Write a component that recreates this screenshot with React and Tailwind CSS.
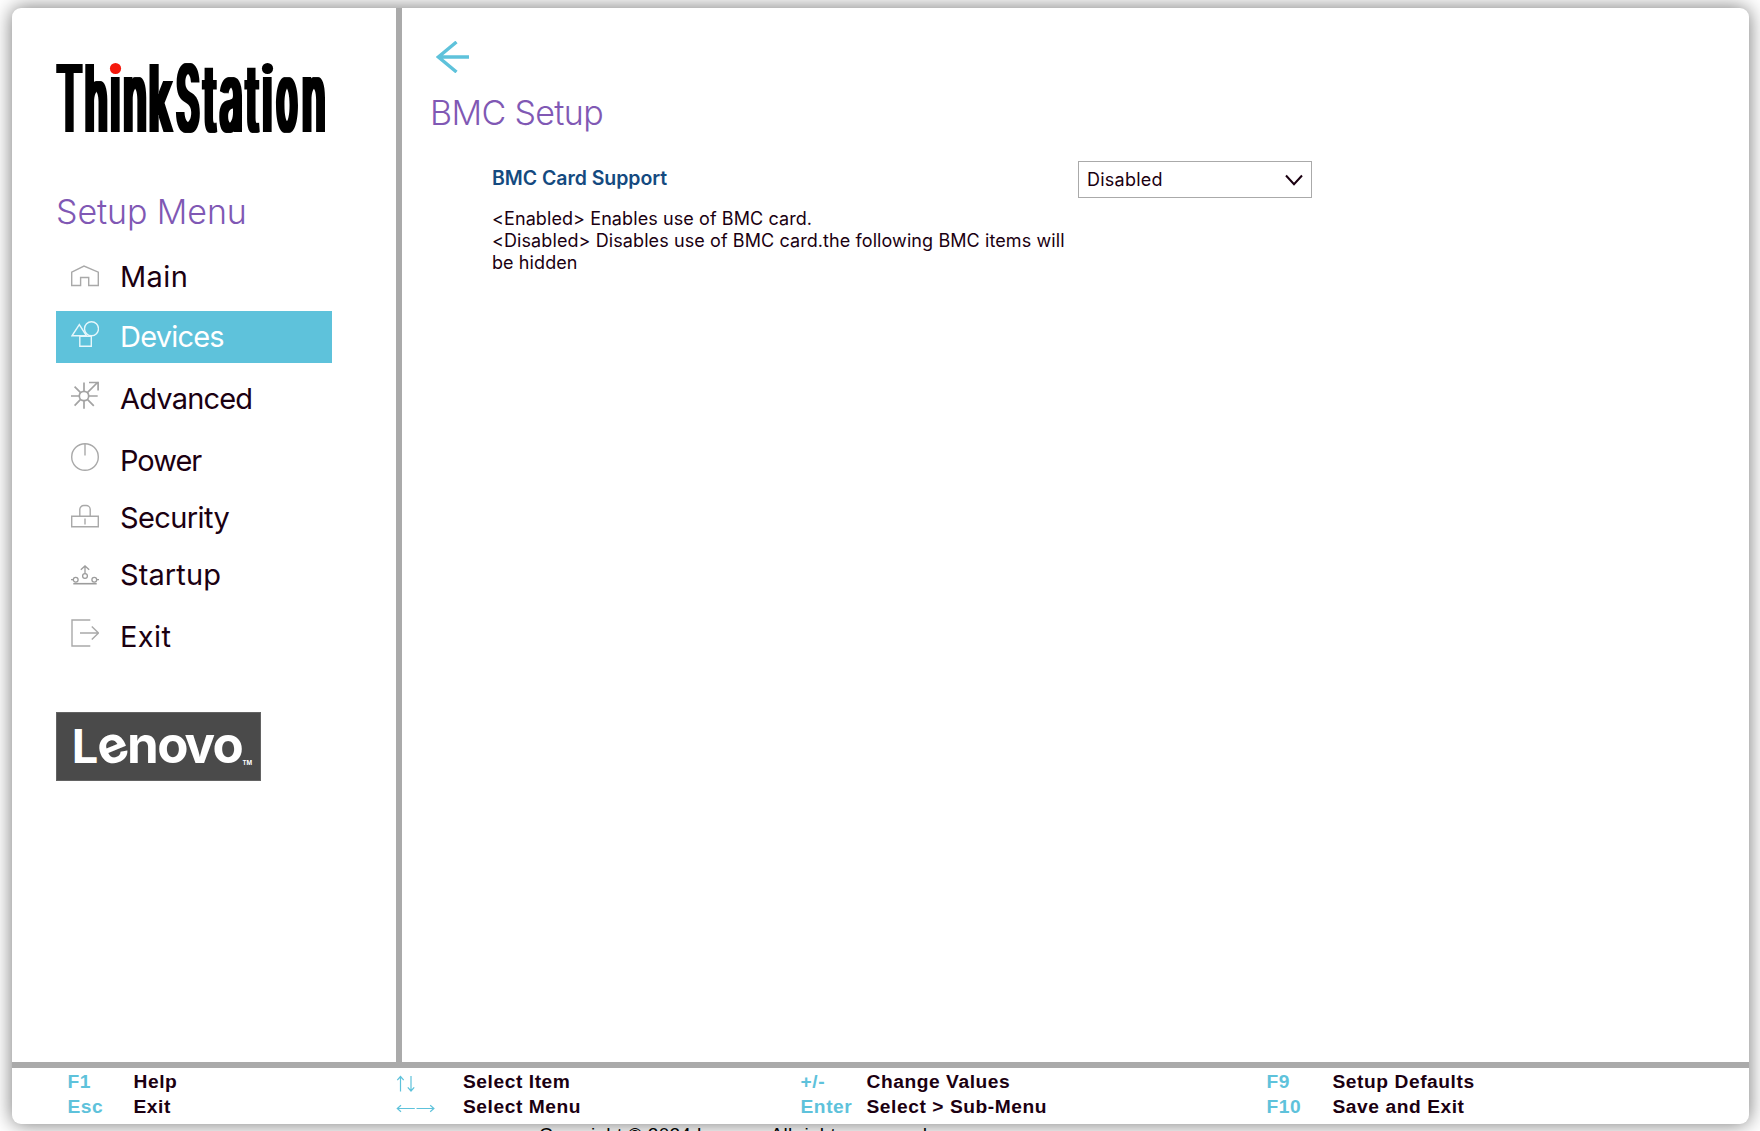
import React from "react";

/* Wordmark glyphs: character, centre x, ink centre in em, font size, horizontal scale, weight */
const THINK = [
  ["T", 13.5, 0.33, 94, 0.422, 500],
  ["h", 40.2, 0.305, 93, 0.406, 600],
  ["i", 59.5, 0.13, 100, 0.44, 500],
  ["n", 79, 0.305, 100, 0.386, 600],
  ["k", 105.6, 0.315, 93, 0.44, 600],
  ["S", 132, 0.325, 93, 0.385, 600],
  ["t", 153.5, 0.17, 95, 0.37, 600],
  ["a", 174.5, 0.27, 100, 0.4, 600],
  ["t", 196, 0.17, 95, 0.37, 600],
  ["i", 211.5, 0.13, 100, 0.44, 500],
  ["o", 231, 0.305, 100, 0.345, 600],
  ["n", 257.8, 0.305, 100, 0.386, 600],
];

function ThinkStationLogo() {
  return (
    <svg className="block h-[70px] w-[276px] overflow-visible" viewBox="0 0 276 70">
      <defs>
        <filter id="thicken" filterUnits="userSpaceOnUse" x="-4" y="-10" width="290" height="90">
          <feMorphology operator="dilate" radius="2 0" />
        </filter>
      </defs>
      <g filter="url(#thicken)" className="font-[Inter,sans-serif]" fill="#000">
        {THINK.map(([ch, cx, mid, size, sx, weight], i) => (
          <text
            key={i}
            transform={`translate(${cx} 69) scale(${sx} 1)`}
            x={-mid * size}
            y="0"
            fontSize={size}
            fontWeight={weight}
          >
            {ch}
          </text>
        ))}
      </g>
      <rect x="52.5" y="-10" width="14" height="24" fill="#fff" />
      <rect x="205" y="-10" width="14" height="24" fill="#fff" />
      <circle cx="59.5" cy="5.5" r="5.6" fill="#f5180c" />
      <circle cx="211.5" cy="5.5" r="5.6" fill="#000" />
    </svg>
  );
}

function LenovoLogo() {
  return (
    <svg className="block h-[69px] w-[205px] overflow-visible" viewBox="0 0 205 69">
      <rect x="0.5" y="0.5" width="204" height="68" fill="#4a4a4a" stroke="#636363" />
      <text className="font-[Inter,sans-serif] font-bold" fill="#fff">
        <tspan x="15.7" y="51" fontSize="47">L</tspan>
        <tspan x="48" y="55.6" fontSize="51" rotate="-22">e</tspan>
        <tspan x="70.9" y="51" fontSize="51">n</tspan>
        <tspan x="101.2" y="51" fontSize="51">o</tspan>
        <tspan x="128.5" y="51" fontSize="51">v</tspan>
        <tspan x="156.6" y="51" fontSize="51">o</tspan>
        <tspan x="186.6" y="52.7" fontSize="6">TM</tspan>
      </text>
    </svg>
  );
}

function Icon({ height, children }) {
  return (
    <svg
      className="block w-7 shrink-0"
      height={height}
      viewBox={`0 0 28 ${height}`}
      fill="none"
      stroke="currentColor"
      strokeWidth="1.4"
    >
      {children}
    </svg>
  );
}

const icons = {
  main: (
    <Icon height={22}>
      <path d="M.7 20.5V7.2L13 1l14.3 6.2v13.3h-9.6v-8H9.6v8z" />
    </Icon>
  ),
  devices: (
    <Icon height={26}>
      <path d="M8.3 3.6 1 14.8h14.5z" />
      <circle cx="20.5" cy="7.7" r="7" />
      <path d="M8.8 15.3h11.5v10H8.8z" />
    </Icon>
  ),
  advanced: (
    <Icon height={28}>
      <g strokeWidth="1.7" stroke="#a3a3a3">
        <circle cx="13" cy="15" r="4.7" />
        <path d="M13 1.5v8.7M13 19.8v8M0 15h8.3M17.7 15h9M3.6 5.6l6 6M16.4 18.4l6.4 6.4M3.6 24.6l6-6.2M16.4 11.6 27 1M18 1.5h9.1v8" />
      </g>
    </Icon>
  ),
  power: (
    <Icon height={28}>
      <circle cx="14" cy="14" r="13.3" />
      <path d="M14 1v11.5" />
    </Icon>
  ),
  security: (
    <Icon height={24}>
      <path d="M.7 12.2h26.6v10.6H.7zM8.8 12V5.5a4 4 0 0 1 4-4h2.4a4 4 0 0 1 4 4V12" />
      <path d="M14 14.6v6" />
    </Icon>
  ),
  startup: (
    <Icon height={20}>
      <g strokeWidth="1.3" stroke="#9c9c9c">
        <circle cx="14" cy="11" r="2.4" />
        <circle cx="4.7" cy="14.7" r="2.4" />
        <circle cx="23.3" cy="14.7" r="2.4" />
        <path d="M14 8.5V1.3M9.8 4.8 14 1l4.2 3.8M0 14.7h2.2M25.8 14.7H28" />
        <path d="M2.3 18.7h23.4" strokeWidth="1.6" />
      </g>
    </Icon>
  ),
  exit: (
    <Icon height={28}>
      <path d="M19.3 1H1v26h18.3M9 14h18M20.8 7.4l6.7 6.6-6.7 6.6" />
    </Icon>
  ),
};

const menu = [
  { id: "main", label: "Main", row: "mb-2 tracking-[0.4px]" },
  { id: "devices", label: "Devices", active: true, row: "mb-2.5 tracking-[-0.8px]" },
  { id: "advanced", label: "Advanced", row: "mb-2.5 tracking-[-0.8px]" },
  { id: "power", label: "Power", row: "mb-[5px] tracking-[-1px]" },
  { id: "security", label: "Security", row: "mb-[5px] tracking-[-0.6px]" },
  { id: "startup", label: "Startup", row: "mb-2.5 tracking-[0.1px]" },
  { id: "exit", label: "Exit", row: "tracking-[0.4px]" },
];

function Sidebar() {
  return (
    <aside className="w-[390px] shrink-0 border-r-[6px] border-[#aaaaaa] pt-[55px] pl-11">
      <ThinkStationLogo />
      <h2 className="mt-[59px] text-[34px] leading-10 font-[350] tracking-[-0.1px] text-[#8058b4]">
        Setup Menu
      </h2>
      <nav className="mt-[19px] flex w-[276px] flex-col">
        {menu.map(({ id, label, active, row }) => (
          <a
            key={id}
            className={`flex h-[52px] items-start pl-[15px] text-[29px] leading-[52px] font-normal ${row} ${
              active ? "bg-[#5ec2db] text-white" : "text-[#1b0011]"
            }`}
          >
            <span className={`flex h-9 w-7 items-end ${active ? "text-[#e6f7fb]" : "text-[#a9a9a9]"}`}>
              {icons[id]}
            </span>
            <span className="ml-[21px]">{label}</span>
          </a>
        ))}
      </nav>
      <div className="mt-[49px]">
        <LenovoLogo />
      </div>
    </aside>
  );
}

function Content() {
  return (
    <main className="flex-1 pt-[33px] pl-7">
      <svg className="ml-1.5 block h-8 w-[33px]" viewBox="0 0 33 32" fill="none" stroke="#5ec2db" strokeWidth="3.4">
        <path d="M33 16H2.5M20.5 1 2.4 16l18.1 15" />
      </svg>
      <h1 className="mt-5 text-[34px] leading-10 font-[350] tracking-[-0.65px] text-[#8058b4]">BMC Setup</h1>
      <div className="mt-7 flex pl-[62px]">
        <div className="w-[586px] pt-1.5">
          <div className="text-[19.5px] leading-[22px] font-semibold tracking-[-0.05px] text-[#144a80]">
            BMC Card Support
          </div>
          <p className="mt-[19px] text-[18px] leading-[22px] tracking-[0.09px] text-[#1b0011]">
            &lt;Enabled&gt; Enables use of BMC card.
            <br />
            &lt;Disabled&gt; Disables use of BMC card.the following BMC items will
            <br />
            be hidden
          </p>
        </div>
        <button className="flex h-[37px] w-[234px] items-center justify-between border border-[#aaaaaa] bg-white pr-2 pl-2 text-[18px] tracking-[0.25px] text-[#1b0011]">
          Disabled
          <svg className="h-3 w-[18px]" viewBox="0 0 18 12" fill="none" stroke="currentColor" strokeWidth="2">
            <path d="m1 1.5 8 8.7 8-8.7" />
          </svg>
        </button>
      </div>
    </main>
  );
}

function Arrows({ d }) {
  return (
    <svg className="-ml-px block h-[25px] w-10" viewBox="0 0 40 25" fill="none" stroke="currentColor" strokeWidth="1.2">
      <path d={d} />
    </svg>
  );
}

const upDown = <Arrows d="M4.5 22.5V7.8M1.3 11.2l3.2-3.7 3.2 3.7M15 7v14.7M11.8 18.3l3.2 3.7 3.2-3.7" />;
const leftRight = <Arrows d="M18.8 14.5H1.5M5 11.3l-3.7 3.2L5 17.7M20.5 14.5h17.3M34.2 11.3l3.7 3.2-3.7 3.2" />;

function Keys({ width, items }) {
  return (
    <dl className={`${width} shrink-0`}>
      {items.map(([k, v]) => (
        <div key={v} className="flex whitespace-nowrap">
          <dt className="w-[66px] shrink-0 text-[#5ec2db]">{k}</dt>
          <dd>{v}</dd>
        </div>
      ))}
    </dl>
  );
}

function Footer() {
  return (
    <footer className="flex h-[62px] shrink-0 border-t-[6px] border-[#aaaaaa] pt-px pl-[55.5px] font-['Liberation_Sans',sans-serif] text-[19.2px] leading-[25px] font-bold tracking-[0.56px] text-[#1b0011]">
      <Keys width="w-[329.5px]" items={[["F1", "Help"], ["Esc", "Exit"]]} />
      <Keys width="w-[403.5px]" items={[[upDown, "Select Item"], [leftRight, "Select Menu"]]} />
      <Keys width="w-[466px]" items={[["+/-", "Change Values"], ["Enter", "Select > Sub-Menu"]]} />
      <Keys width="w-[300px]" items={[["F9", "Setup Defaults"], ["F10", "Save and Exit"]]} />
    </footer>
  );
}

export default function App() {
  return (
    <div className="h-[1131px] w-[1760px] overflow-hidden bg-white px-3 pt-2 font-[Inter,sans-serif]">
      <div className="flex h-[1116px] w-[1737px] flex-col overflow-hidden rounded-[9px] bg-white shadow-[0_0_20px_rgba(0,0,0,0.55)]">
        <div className="flex min-h-0 flex-1">
          <Sidebar />
          <Content />
        </div>
        <Footer />
      </div>
      <p className="-mt-px pl-[527px] font-['Liberation_Sans',sans-serif] text-[19px] leading-6 tracking-[0.25px] text-black">
        Copyright © 2024 Lenovo. All rights reserved.
      </p>
    </div>
  );
}
